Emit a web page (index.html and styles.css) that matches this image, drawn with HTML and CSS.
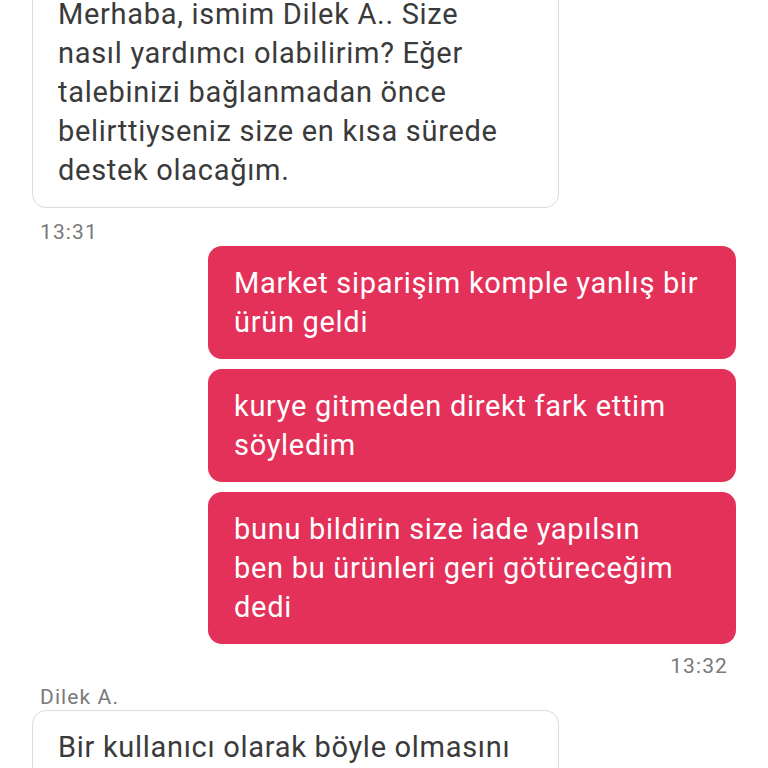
FILE: index.html
```html
<!DOCTYPE html>
<html lang="tr">
<head>
<meta charset="utf-8">
<link rel="stylesheet" href="styles.css">
</head>
<body>
<div class="chat">
  <div class="bubble in first">Merhaba, ismim Dilek A.. Size nasıl yardımcı olabilirim? Eğer talebinizi bağlanmadan önce belirttiyseniz size en kısa sürede destek olacağım.</div>
  <div class="time left">13:31</div>
  <div class="group">
    <div class="bubble out">Market siparişim komple yanlış bir ürün geldi</div>
    <div class="bubble out">kurye gitmeden direkt fark ettim söyledim</div>
    <div class="bubble out">bunu bildirin size iade yapılsın ben&nbsp;bu ürünleri geri götüreceğim dedi</div>
  </div>
  <div class="time right">13:32</div>
  <div class="sender">Dilek A.</div>
  <div class="bubble in">Bir kullanıcı olarak böyle olmasını istemezdim.</div>
</div>
</body>
</html>
```
FILE: styles.css
```css
html, body {
  margin: 0;
  padding: 0;
  background: #ffffff;
  overflow: hidden;
  height: 768px;
}
.chat {
  font-family: Roboto, "Noto Sans", sans-serif;
  padding: 0 32px;
  display: flex;
  flex-direction: column;
}
.bubble {
  font-size: 29px;
  letter-spacing: 0.7px;
  line-height: 39px;
  border-radius: 14px;
  box-sizing: border-box;
}
.bubble.in {
  width: 527px;
  padding: 17px 30px 17px 25px;
  border: 1px solid #dcdcdc;
  color: #3a3a3a;
  background: #fff;
}
.bubble.first {
  margin-top: -23px;
}
.group {
  display: flex;
  flex-direction: column;
  gap: 10px;
  align-items: flex-end;
}
.bubble.out {
  width: 528px;
  padding: 18px 30px 17px 26px;
  background: #e3315a;
  color: #ffffff;
}
.time, .sender {
  font-size: 21px;
  letter-spacing: 1.1px;
  line-height: 24px;
  color: #7a7a7a;
}
.time.left {
  margin: 12px 0 2px 8px;
}
.time.right {
  align-self: flex-end;
  margin: 10px 8px 0 0;
}
.sender {
  margin: 7px 0 1px 8px;
}
```
